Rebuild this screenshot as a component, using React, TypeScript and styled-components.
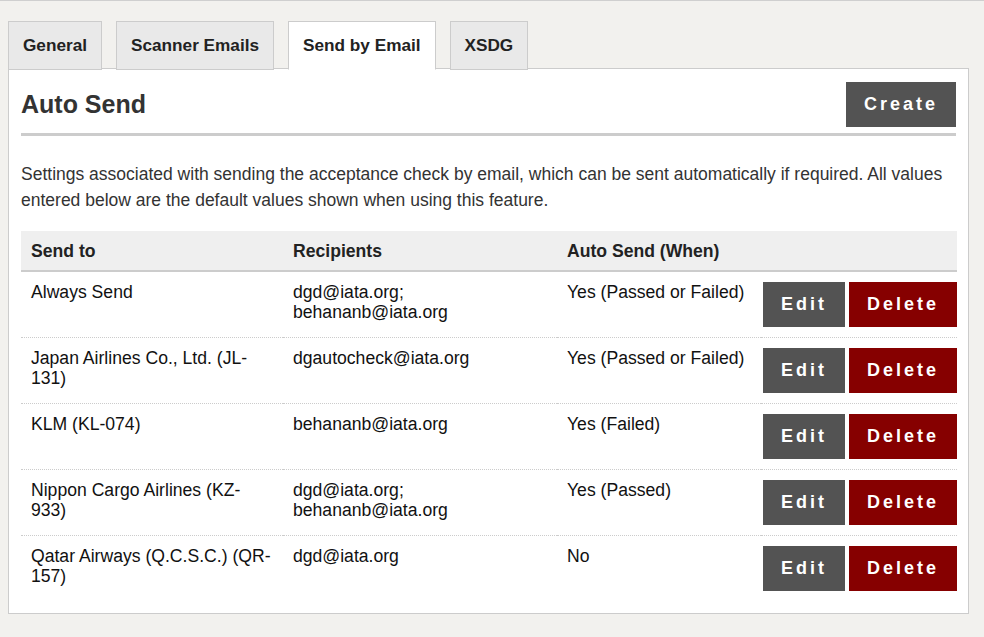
import React, { useState } from 'react'
import styled, { createGlobalStyle } from 'styled-components'

type Rule = {
  id: number
  sendTo: string
  recipients: string[]
  when: string
}

const tabs = ['General', 'Scanner Emails', 'Send by Email', 'XSDG']

const rules: Rule[] = [
  { id: 1, sendTo: 'Always Send', recipients: ['dgd@iata.org;', 'behananb@iata.org'], when: 'Yes (Passed or Failed)' },
  { id: 2, sendTo: 'Japan Airlines Co., Ltd. (JL-131)', recipients: ['dgautocheck@iata.org'], when: 'Yes (Passed or Failed)' },
  { id: 3, sendTo: 'KLM (KL-074)', recipients: ['behananb@iata.org'], when: 'Yes (Failed)' },
  { id: 4, sendTo: 'Nippon Cargo Airlines (KZ-933)', recipients: ['dgd@iata.org;', 'behananb@iata.org'], when: 'Yes (Passed)' },
  { id: 5, sendTo: 'Qatar Airways (Q.C.S.C.) (QR-157)', recipients: ['dgd@iata.org'], when: 'No' },
]

const GlobalStyle = createGlobalStyle`
  html, body {
    margin: 0;
    background: #f2f1ee;
    font-family: 'Liberation Sans', Arial, sans-serif;
    color: #222;
  }
`

const Page = styled.div`
  border-top: 1px solid #cfcfcf;
  padding: 20px 15px 22px 8px;
`

const TabBar = styled.div`
  display: flex;
  gap: 14px;
  margin-bottom: -2px;
  position: relative;
  z-index: 1;
`

const Tab = styled.div<{ $active?: boolean }>`
  display: flex;
  align-items: center;
  height: 47px;
  padding: 0 14px;
  border: 1px solid #cccccc;
  border-bottom-color: ${(p) => (p.$active ? '#fff' : '#cccccc')};
  background: ${(p) => (p.$active ? '#fff' : '#e9e9e9')};
  font-size: 17.2px;
  font-weight: bold;
  color: #222;
  cursor: pointer;
`

const Panel = styled.section`
  background: #fff;
  border: 1px solid #cccccc;
  padding: 13px 12px 12px;
`

const Header = styled.div`
  display: flex;
  justify-content: space-between;
  align-items: center;
  padding-bottom: 6px;
  border-bottom: 3px solid #cccccc;
`

const Title = styled.h2`
  margin: 0;
  font-size: 25px;
  font-weight: bold;
  color: #333;
`

const Button = styled.button<{ $danger?: boolean }>`
  height: 45px;
  padding: 0 18px;
  border: 0;
  background: ${(p) => (p.$danger ? '#860000' : '#535353')};
  color: #fff;
  font-family: 'Liberation Sans', Arial, sans-serif;
  font-size: 18px;
  font-weight: bold;
  letter-spacing: 3px;
  cursor: pointer;
`

const Intro = styled.p`
  margin: 25px 0 18px;
  font-size: 17.5px;
  line-height: 26px;
  color: #333;
`

const Table = styled.table`
  width: 100%;
  border-collapse: collapse;
  table-layout: fixed;
  font-size: 17.6px;
  line-height: 20px;
`

const Th = styled.th`
  background: #efefef;
  text-align: left;
  padding: 10px 10px 9px;
  border-bottom: 2px solid #cccccc;
  font-weight: bold;
  color: #222;
`

const Row = styled.tr`
  border-bottom: 1px dotted #cccccc;
  &:last-child {
    border-bottom: 0;
  }
`

const Td = styled.td`
  padding: 10px;
  vertical-align: top;
  color: #111;
`

const Actions = styled.td`
  padding: 10px 0;
  vertical-align: top;
`

const ActionGroup = styled.div`
  display: flex;
  justify-content: flex-end;
  gap: 4px;
`

const App = () => {
  const [active, setActive] = useState(2)
  return (
    <Page>
      <GlobalStyle />
      <TabBar>
        {tabs.map((t, i) => (
          <Tab key={t} $active={active === i} onClick={() => setActive(i)}>
            {t}
          </Tab>
        ))}
      </TabBar>
      <Panel>
        <Header>
          <Title>Auto Send</Title>
          <Button>Create</Button>
        </Header>
        <Intro>
          Settings associated with sending the acceptance check by email, which can be sent automatically if required.
          All values entered below are the default values shown when using this feature.
        </Intro>
        <Table>
          <colgroup>
            <col style={{ width: 262 }} />
            <col style={{ width: 274 }} />
            <col style={{ width: 204 }} />
            <col style={{ width: 196 }} />
          </colgroup>
          <thead>
            <tr>
              <Th>Send to</Th>
              <Th>Recipients</Th>
              <Th>Auto Send (When)</Th>
              <Th></Th>
            </tr>
          </thead>
          <tbody>
            {rules.map((r) => (
              <Row key={r.id}>
                <Td>{r.sendTo}</Td>
                <Td>
                  {r.recipients.map((m) => (
                    <div key={m}>{m}</div>
                  ))}
                </Td>
                <Td>{r.when}</Td>
                <Actions>
                  <ActionGroup>
                    <Button>Edit</Button>
                    <Button $danger>Delete</Button>
                  </ActionGroup>
                </Actions>
              </Row>
            ))}
          </tbody>
        </Table>
      </Panel>
    </Page>
  )
}

export default App
